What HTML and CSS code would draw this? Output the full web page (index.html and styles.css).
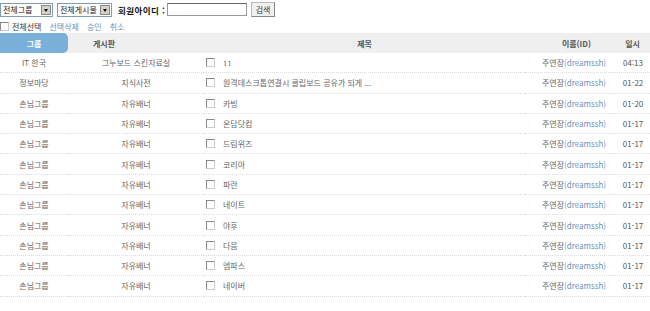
FILE: index.html
```html
<!DOCTYPE html>
<html lang="ko">
<head>
    <meta charset="UTF-8">
    <title>회원 게시물 관리</title>
    <link rel="stylesheet" href="styles.css">
</head>
<body>
    <form class="search-bar">
        <span class="select select-group">전체그룹<span class="select-arrow"></span></span>
        <span class="select select-board">전체게시물<span class="select-arrow"></span></span>
        <label class="search-label">회원아이디 :</label>
        <span class="search-input"></span>
        <span class="search-btn">검색</span>
    </form>

    <div class="actions">
        <span class="check"></span>
        <span class="check-all">전체선택</span>
        <a class="action-link">선택삭제</a>
        <a class="action-link">승인</a>
        <a class="action-link">취소</a>
    </div>

    <table class="post-table">
        <colgroup>
            <col class="col-group">
            <col class="col-board">
            <col class="col-title">
            <col class="col-name">
            <col class="col-date">
        </colgroup>
        <thead>
            <tr>
                <th class="th-group"><span class="tab">그룹</span></th>
                <th class="th-board">게시판</th>
                <th class="th-title">제목</th>
                <th class="th-name">이름(ID)</th>
                <th class="th-date">일시</th>
            </tr>
        </thead>
        <tbody id="rows"></tbody>
    </table>

    <script>
        // 게시물 목록
        const posts = [
            ['IT 한국', '그누보드 스킨자료실', '11', '04:13'],
            ['정보마당', '지식사전', '원격데스크톱연결시 클립보드 공유가 되게 ...', '01-22'],
            ['손님그룹', '자유배너', '카빙', '01-20'],
            ['손님그룹', '자유배너', '온담닷컴', '01-17'],
            ['손님그룹', '자유배너', '드림위즈', '01-17'],
            ['손님그룹', '자유배너', '코리아', '01-17'],
            ['손님그룹', '자유배너', '파란', '01-17'],
            ['손님그룹', '자유배너', '네이트', '01-17'],
            ['손님그룹', '자유배너', '야후', '01-17'],
            ['손님그룹', '자유배너', '다음', '01-17'],
            ['손님그룹', '자유배너', '엠파스', '01-17'],
            ['손님그룹', '자유배너', '네이버', '01-17']
        ];

        document.getElementById('rows').innerHTML = posts.map(p => `
            <tr>
                <td class="td-group">${p[0]}</td>
                <td class="td-board">${p[1]}</td>
                <td class="td-title"><span class="check"></span><span class="${/^\d+$/.test(p[2]) ? 'num' : ''}">${p[2]}</span></td>
                <td class="td-name">주연장<span class="mb-id">(dreamssh)</span></td>
                <td class="td-date">${p[3]}</td>
            </tr>
        `).join('');
    </script>
</body>
</html>
```

FILE: styles.css
```css
body {
    font-family: "Noto Sans CJK KR", "Liberation Sans", sans-serif;
    font-size: 8px;
    margin: 0;
    background-color: #ffffff;
    color: #666666;
}

.search-bar {
    display: flex;
    align-items: center;
    height: 17px;
    margin: 1px 0 0 0;
}

.select {
    position: relative;
    display: flex;
    align-items: center;
    height: 14px;
    padding-left: 2px;
    border: 1px solid #7f9db9;
    color: #222;
    box-sizing: border-box;
    line-height: 1;
}

.select-group {
    width: 53px;
    margin-right: 4px;
}

.select-board {
    width: 55px;
    margin-right: 6px;
}

.select-arrow {
    position: absolute;
    right: 1px;
    top: 1px;
    width: 10px;
    height: 10px;
    background-color: #d4d0c8;
    border: 1px solid #888;
    box-sizing: border-box;
}

.select-arrow::after {
    content: "";
    position: absolute;
    left: 2px;
    top: 3px;
    border-left: 2.5px solid transparent;
    border-right: 2.5px solid transparent;
    border-top: 3px solid #000;
}

.search-label {
    font-size: 8.5px;
    font-weight: bold;
    letter-spacing: 0.4px;
    color: #111;
    margin-right: 2px;
}

.search-input {
    width: 80px;
    height: 13px;
    border: 1px solid #999;
    border-top-color: #666;
    box-sizing: border-box;
    margin-right: 4px;
}

.search-btn {
    display: flex;
    align-items: center;
    justify-content: center;
    width: 24px;
    height: 15px;
    background-color: #f0f0f0;
    border: 1px solid #bbb;
    border-bottom-color: #888;
    border-right-color: #888;
    box-sizing: border-box;
    color: #444;
}

.actions {
    display: flex;
    align-items: center;
    height: 13px;
    margin-top: 2px;
}

.check {
    display: inline-block;
    width: 7px;
    height: 7px;
    border: 1px solid #888;
    border-right-color: #ccc;
    border-bottom-color: #ccc;
    background-color: #fff;
    flex-shrink: 0;
}

.check-all {
    color: #333;
    margin: 0 8px 0 3px;
}

.action-link {
    color: #6f8fb8;
    margin-right: 8px;
}

.post-table {
    width: 650px;
    border-collapse: collapse;
    table-layout: fixed;
    margin-top: 0;
}

.col-group { width: 68px; }
.col-board { width: 136px; }
.col-title { width: 321px; }
.col-name { width: 86px; }
.col-date { width: 39px; }

.post-table thead tr {
    background-color: #efefef;
}

.post-table th {
    height: 20px;
    padding: 0;
    font-weight: bold;
    color: #555;
}

.th-group {
    text-align: left;
}

.tab {
    display: flex;
    align-items: center;
    justify-content: center;
    width: 68px;
    height: 20px;
    background-color: #79b0da;
    color: #ffffff;
    border-radius: 0 5px 5px 0;
}

.th-board {
    text-align: left;
    padding-left: 25px !important;
}

.th-title {
    text-align: center;
}

.th-name {
    text-align: right;
    padding-right: 20px !important;
}

.th-date {
    text-align: center;
    padding-left: 4px !important;
}

.post-table td {
    height: 19.3px;
    padding: 0;
    border-bottom: 1px dotted #dcdcdc;
    white-space: nowrap;
    overflow: hidden;
}

.td-group,
.td-board,
.td-date {
    text-align: center;
}

.td-title {
    padding-left: 2px !important;
}

.td-title .check {
    margin-right: 8px;
    vertical-align: -1px;
}

.num {
    font-family: "DejaVu Serif", serif;
    font-size: 7px;
}

.td-name {
    text-align: right;
    padding-right: 5px !important;
}

.mb-id {
    color: #6f8fb8;
}

.td-date {
    color: #555;
    padding-left: 5px !important;
}
```
